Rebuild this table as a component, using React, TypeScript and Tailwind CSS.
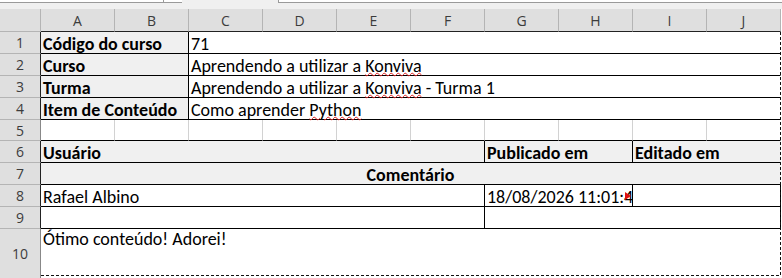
import React from "react";

const font = "font-['Carlito','Liberation_Sans',sans-serif]";
const hdrFont = "font-['Open_Sans','Noto_Sans',sans-serif]";

function ColHead({ label }: { label: string }) {
  return (
    <div className={`flex items-center justify-center border-r border-b border-r-[#b4b4b4] border-b-[#222] bg-[#dfdfdf] text-[14px] text-[#3c3c3c] ${hdrFont}`}>
      {label}
    </div>
  );
}

function RowHead({ n, dark = true }: { n: number; dark?: boolean }) {
  return (
    <div
      className={`flex items-center justify-center border-b border-r border-b-[#b4b4b4] bg-[#dfdfdf] text-[14px] text-[#3c3c3c] ${hdrFont} ${
        dark ? "border-r-[#222]" : "border-r-[#888]"
      }`}
    >
      {n}
    </div>
  );
}

// spell-check squiggle, kept above neighbouring cells
const spell = "relative z-10 underline decoration-wavy decoration-[#e02020] decoration-1 underline-offset-[0px]";

export default function App() {
  const cols = ["A", "B", "C", "D", "E", "F", "G", "H", "I", "J"];
  // cells own their right and bottom rules
  const base = `flex items-end whitespace-nowrap border-r border-b border-b-black px-[2px] text-[18px] leading-[18px] text-black ${font}`;
  const inner = `${base} border-r-black`;
  const edge = `${base} border-r-transparent`;
  const label = `${inner} col-span-2 bg-[#f0f0f0] font-bold`;
  const value = `${edge} col-span-8 bg-white`;
  return (
    <div className="relative h-[278px] w-[782px] overflow-hidden bg-[#f0f0f0]">
      {/* name box + formula input strip */}
      <div className="flex h-[9px] items-start">
        <div className="flex h-[3px] w-[182px] border-b border-[#9a9a9a] bg-white">
          <div className="ml-auto h-[3px] w-[19px] border-l border-[#9a9a9a]" />
        </div>
        <div className="ml-[96px] h-[3px] flex-1 border-b border-l border-[#9a9a9a] bg-white" />
      </div>

      <div className="grid grid-cols-[41px_repeat(10,74px)] grid-rows-[23px_22px_22px_22px_22px_21px_22px_22px_22px_22px_50px] bg-white">
        {/* column header row */}
        <div className="border-r border-b border-r-[#b4b4b4] border-b-[#b4b4b4] bg-[#dfdfdf]" />
        {cols.map((c) => (
          <ColHead key={c} label={c} />
        ))}

        {/* course info block */}
        <RowHead n={1} />
        <div className={label}>Código do curso</div>
        <div className={value}>71</div>

        <RowHead n={2} />
        <div className={label}>Curso</div>
        <div className={value}>
          Aprendendo a utilizar a&nbsp;<span className={spell}>Konviva</span>
        </div>

        <RowHead n={3} />
        <div className={label}>Turma</div>
        <div className={value}>
          Aprendendo a utilizar a&nbsp;<span className={spell}>Konviva</span>&nbsp;- Turma 1
        </div>

        <RowHead n={4} />
        <div className={label}>Item de Conteúdo</div>
        <div className={value}>
          Como aprender&nbsp;<span className={spell}>Python</span>
        </div>

        {/* spacer row with plain gridlines */}
        <RowHead n={5} dark={false} />
        {cols.map((c) => (
          <div
            key={c}
            className={`border-r border-b border-b-black ${c === "J" ? "border-r-transparent" : "border-r-[#d2d2d2]"}`}
          />
        ))}

        {/* comment table header */}
        <RowHead n={6} />
        <div className={`${inner} col-span-6 bg-[#f0f0f0] font-bold`}>Usuário</div>
        <div className={`${inner} col-span-2 bg-[#f0f0f0] font-bold`}>Publicado em</div>
        <div className={`${edge} col-span-2 bg-[#f0f0f0] font-bold`}>Editado em</div>

        <RowHead n={7} />
        <div className={`${edge} col-span-10 justify-center bg-[#f0f0f0] font-bold`}>Comentário</div>

        {/* comment rows */}
        <RowHead n={8} />
        <div className={`${inner} col-span-6`}>Rafael Albino</div>
        <div className={`${inner} relative col-span-2 overflow-hidden`}>
          <span>18/08/2026 11:01:44</span>
          <span className="absolute right-[1px] top-[7px] h-0 w-0 border-y-[4px] border-l-[6px] border-y-transparent border-l-[#e01010]" />
        </div>
        <div className={`${inner} col-span-2`} />

        <RowHead n={9} />
        <div className={`${inner} col-span-6`} />
        <div className={`${inner} col-span-4`} />

        <RowHead n={10} dark={false} />
        <div className={`col-span-10 px-[2px] pt-px text-[18px] leading-[18px] text-black ${font}`}>
          Ótimo conteúdo! Adorei!
        </div>
      </div>

      {/* page break markers */}
      <div className="pointer-events-none absolute left-[780px] top-[32px] h-[244px] w-px bg-[repeating-linear-gradient(to_bottom,#111_0_3px,transparent_3px_5px)]" />
      <div className="pointer-events-none absolute left-[41px] top-[275px] h-px w-[740px] bg-[repeating-linear-gradient(to_right,#111_0_3px,transparent_3px_5px)]" />
    </div>
  );
}
